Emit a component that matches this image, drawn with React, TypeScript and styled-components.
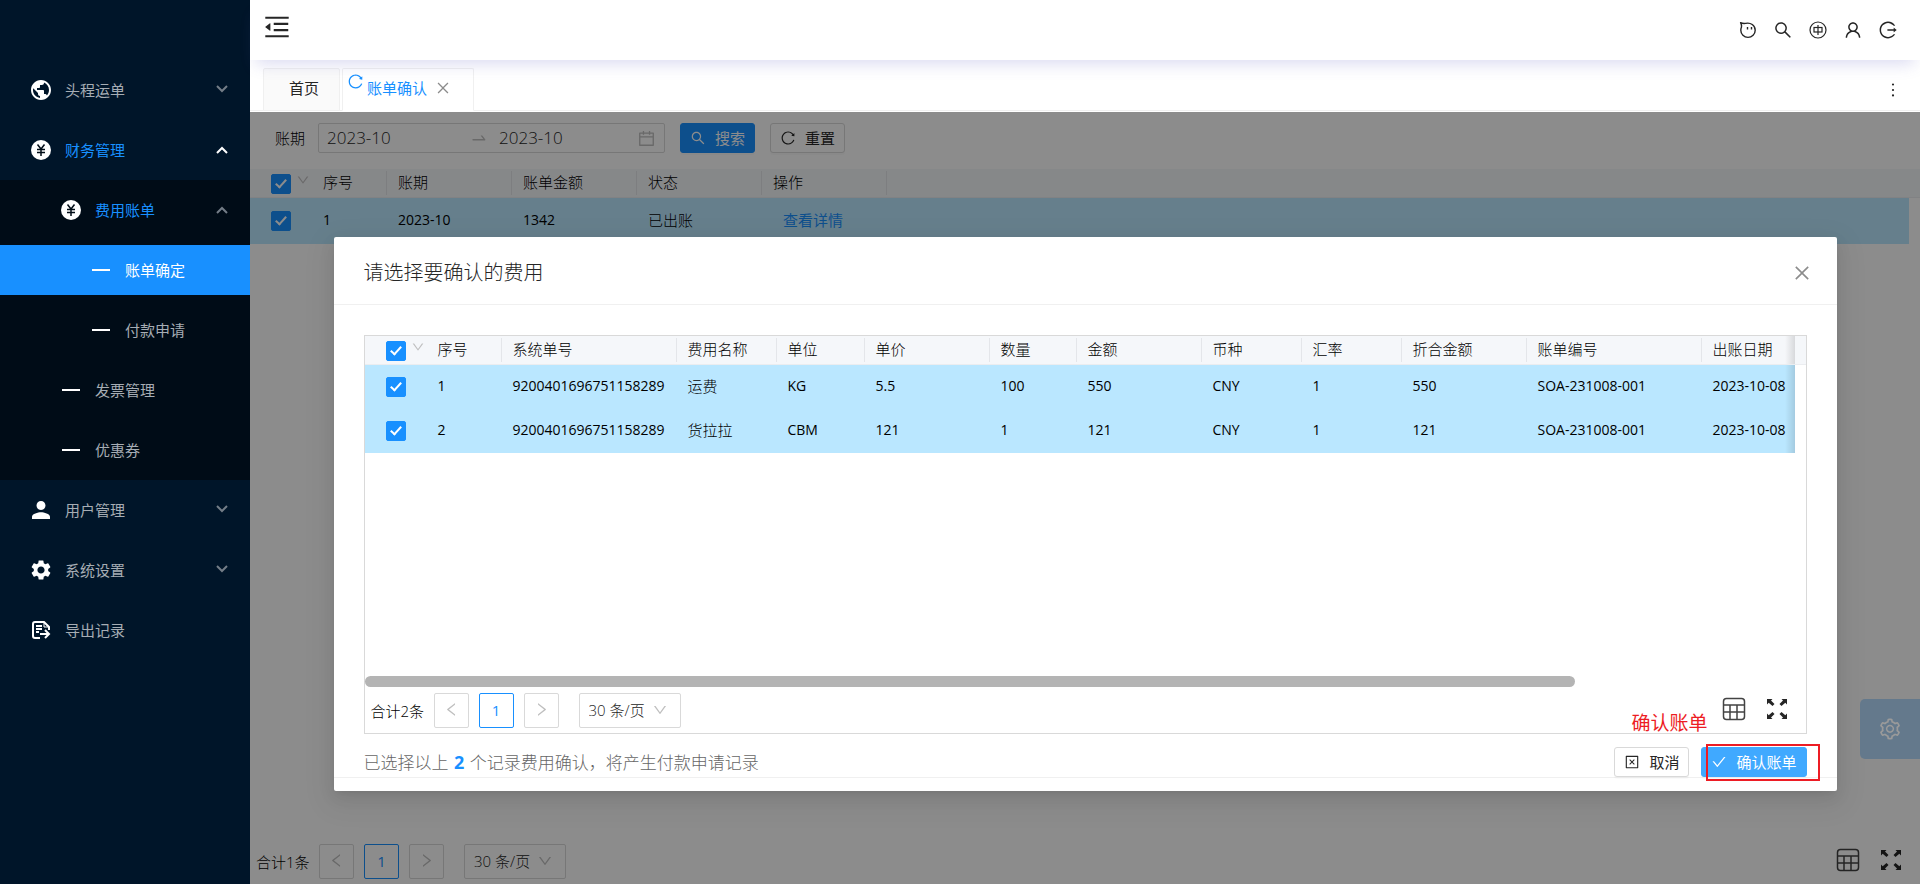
import React, { useState } from 'react';
import styled, { createGlobalStyle, css } from 'styled-components';
import {
  AiOutlineCalendar,
  AiOutlineCheck,
  AiOutlineClose,
  AiOutlineCloseSquare,
  AiOutlineDown,
  AiOutlineLeft,
  AiOutlineLogout,
  AiOutlineMenuFold,
  AiOutlineMore,
  AiOutlineReload,
  AiOutlineRight,
  AiOutlineSearch,
  AiOutlineSetting,
  AiOutlineSwapRight,
  AiOutlineUser,
} from 'react-icons/ai';
import { IoMdPerson } from 'react-icons/io';
import { MdPublic, MdSettings } from 'react-icons/md';

const GlobalStyle = createGlobalStyle`
  *, *::before, *::after { box-sizing: border-box; }
  body {
    margin: 0;
    background: #fff;
    color: #000;
    font-family: "Open Sans", "Noto Sans CJK SC", sans-serif;
    font-size: 15px;
    font-weight: 300;
    line-height: 20px;
  }
  button, input, select { font: inherit; color: inherit; margin: 0; }
  button { cursor: pointer; }
  svg { display: block; flex: none; }
`;

const blue = '#1890ff';

/* ---------- drawings ---------- */

const ChevronIcon = ({ up }: { up?: boolean }) => (
  <svg width="12" height="8" viewBox="0 0 12 8" fill="none" stroke="currentColor" strokeWidth="2">
    <path d={up ? 'M1 7l5-5 5 5' : 'M1 1l5 5 5-5'} />
  </svg>
);

const DashIcon = () => (
  <svg width="18" height="20" viewBox="0 0 18 20">
    <rect y="9" width="18" height="2" fill="#fff" />
  </svg>
);

const YuanIcon = () => (
  <svg width="20" height="20" viewBox="0 0 20 20">
    <circle cx="10" cy="10" r="10" fill="currentColor" />
    <path d="M6.500 4.500L10 9l3.500-4.500M10 9v7M6 9.500h8M6 12.500h8" fill="none" stroke="#000c17" strokeWidth="1.500" />
  </svg>
);

const ExportIcon = () => (
  <svg width="20" height="20" viewBox="0 0 20 20" fill="none" stroke="currentColor" strokeWidth="2">
    <path d="M9 18H4q-2 0-2-2V4q0-2 2-2h9l5 5v3" />
    <path d="M13 2v5h5" strokeWidth="1" />
    <path d="M5 6h6M5 9h6M5 12h3" />
    <path d="M9 14h8M14 10l4 4-4 4" />
  </svg>
);

const FaceIcon = () => (
  <svg width="18" height="18" viewBox="0 0 18 18" fill="none" stroke="currentColor" strokeWidth="1.4">
    <path d="M1.6 1.7c1.6.8 3.2 1 5 .7 5-1.2 9.600 2 9.600 6.800a7.200 7.200 0 0 1-14.400 0c0-1.200.3-2.200.7-3.200.2-1.500-.2-3-.9-4.300z" strokeLinejoin="round" />
    <path d="M8.500 6v2.400M12.500 6v2.400" />
  </svg>
);

const LanguageIcon = () => (
  <svg width="18" height="18" viewBox="0 0 18 18" fill="none" stroke="currentColor" strokeWidth="1.2">
    <circle cx="9" cy="9" r="8" />
    <rect x="5" y="6.500" width="8" height="4.500" />
    <path d="M9 4v10" />
  </svg>
);

const GridIcon = () => (
  <svg width="24" height="24" viewBox="0 0 24 24" fill="none" stroke="#434343" strokeWidth="1.500">
    <rect x="1.500" y="1.500" width="21" height="21" rx="3" />
    <path d="M1.500 8h21M1.500 15h21M8 8v14M15 8v14" />
  </svg>
);

const ExpandIcon = () => (
  <svg width="20" height="20" viewBox="0 0 20 20">
    <path
      fill="currentColor"
      d="M0 0h5.500L4 1.600l3.500 3.500-2 2L1.700 3.800 0 5.500zM20 0v5.500l-1.700-1.700-3.800 3.300-2-2L16 1.600 14.500 0zM0 20v-5.500l1.700 1.700 3.800-3.300 2 2L4 18.400 5.500 20zM20 20h-5.500l1.500-1.600-3.500-3.500 2-2 3.800 3.300 1.700-1.700z"
    />
  </svg>
);

/* ---------- shell ---------- */

const Shell = styled.div`
  display: flex;
  min-height: 100vh;
`;

const Sidebar = styled.nav`
  flex: none;
  width: 250px;
  padding-top: 60px;
  background: #001529;
  font-weight: 400;
`;

const Main = styled.div`
  flex: 1;
  min-width: 0;
  display: flex;
  flex-direction: column;
`;

const MenuGroup = styled.div`
  background: #000c17;
`;

const MenuItem = styled.a<{ $level?: number; $tone?: 'open' | 'active' }>`
  display: flex;
  align-items: center;
  height: 50px;
  margin: 5px 0;
  padding: 0 22px 0 ${(p) => 31 + 30 * ((p.$level ?? 1) - 1)}px;
  gap: 14px;
  color: ${(p) => (p.$tone === 'open' ? blue : p.$tone === 'active' ? '#fff' : '#a6adb4')};
  background: ${(p) => (p.$tone === 'active' ? blue : 'transparent')};
  text-decoration: none;
`;

const MenuRow = styled.div`
  display: flow-root;
`;

const MenuIcon = styled.span`
  display: flex;
  justify-content: center;
  width: 20px;
  color: #fff;
`;

const MenuArrow = styled.span<{ $bright?: boolean; $down?: boolean }>`
  margin: 0 0 ${(p) => (p.$down ? 3 : 0)}px auto;
  color: ${(p) => (p.$bright ? '#fff' : '#737d87')};
`;

const Header = styled.header`
  position: relative;
  z-index: 1;
  display: flex;
  align-items: center;
  justify-content: space-between;
  height: 60px;
  padding: 0 22px 0 12px;
  background: #fff;
  box-shadow: 0 10px 16px -6px rgba(90, 90, 190, 0.22);
`;

const IconButton = styled.button`
  display: flex;
  align-items: center;
  justify-content: center;
  padding: 0;
  border: 0;
  background: none;
  color: #262626;
`;

const FoldButton = styled(IconButton)`
  margin-bottom: 6px;
`;

const HeaderTools = styled.div`
  display: flex;
  gap: 15px;
  & > button { width: 20px; height: 20px; }
`;

const TabBar = styled.div`
  display: flex;
  align-items: flex-end;
  gap: 2px;
  height: 51px;
  margin-bottom: 1px;
  padding-left: 13px;
  border-bottom: 1px solid #f0f0f0;
`;

const Tab = styled.button<{ $active?: boolean }>`
  display: flex;
  align-items: center;
  height: 43px;
  margin-bottom: -1px;
  padding: ${(p) => (p.$active ? '0 22px 3px 4px' : '0 20px 3px 25px')};
  border: 1px solid #f0f0f0;
  border-bottom-color: ${(p) => (p.$active ? '#fff' : '#f0f0f0')};
  border-radius: 2px 2px 0 0;
  background: ${(p) => (p.$active ? '#fff' : '#fafafa')};
  color: ${(p) => (p.$active ? blue : '#262626')};
  font-weight: 400;
  & > .reload { margin: 0 3px 14px 0; }
  & > .close { margin-left: 8px; color: #8c8c8c; }
`;

const MoreButton = styled(IconButton)`
  margin: 0 17px 10px auto;
`;

/* ---------- page content ---------- */

const Workspace = styled.main`
  position: relative;
  flex: 1;
  display: flex;
  flex-direction: column;
`;

const SearchBar = styled.form`
  display: flex;
  align-items: center;
  gap: 15px;
  padding: 11px 25px 16px;
`;

const Field = styled.div`
  display: flex;
  align-items: center;
  gap: 13px;
`;

const RangeBox = styled.div`
  display: grid;
  grid-template-columns: 143px 29px 1fr auto;
  align-items: center;
  width: 347px;
  height: 30px;
  padding: 0 8px;
  border: 1px solid #d9d9d9;
  border-radius: 2px;
  color: #bfbfbf;
`;

const RangeInput = styled.input`
  width: 100%;
  min-width: 0;
  padding: 0;
  border: 0;
  outline: 0;
  background: none;
  color: #262626;
  font-size: 17px;
`;

const Button = styled.button<{ $kind?: 'primary' | 'bright' }>`
  display: flex;
  align-items: center;
  gap: 9px;
  height: 30px;
  padding: 0 9px;
  border: 1px solid #d9d9d9;
  border-radius: 3px;
  background: #fff;
  color: #262626;
  font-weight: 400;
  box-shadow: 0 2px 0 rgba(0, 0, 0, 0.02);
  white-space: nowrap;
  ${(p) =>
    p.$kind &&
    css`
      color: #fff;
      background: ${p.$kind === 'primary' ? blue : '#40a9ff'};
      border-color: ${p.$kind === 'primary' ? blue : '#40a9ff'};
    `}
`;

const TableArea = styled.div`
  flex: 1;
`;

const Table = styled.table`
  width: 100%;
  table-layout: fixed;
  border-collapse: separate;
  border-spacing: 0;
`;

const Th = styled.th`
  position: relative;
  height: 29px;
  padding: 0 0 2px 11px;
  border-bottom: 1px solid #ebedf0;
  background: #f5f7fa;
  font-weight: inherit;
  text-align: left;
  white-space: nowrap;
  &:not(.plain)::after {
    content: '';
    position: absolute;
    top: 2px;
    right: 0;
    width: 1px;
    height: 24px;
    background: #e4e6ea;
  }
`;

const Td = styled.td<{ $tall?: boolean }>`
  position: relative;
  height: ${(p) => (p.$tall ? 46 : 44)}px;
  padding: 0 0 2px 11px;
  background: #bae7ff;
  font-size: 14px;
  font-weight: 400;
  white-space: nowrap;
`;

const CjkText = styled.span`
  font-size: 15px;
  font-weight: 300;
`;

const GutterTd = styled.td`
  background: none;
`;

const fade = css`
  content: '';
  position: absolute;
  top: 0;
  right: 0;
  width: 10px;
  height: 100%;
  background: linear-gradient(to right, rgba(0, 0, 0, 0), rgba(0, 0, 0, 0.12));
`;

const EdgeTh = styled(Th)`
  &:not(.plain)::after { ${fade} }
`;

const EdgeTd = styled(Td)`
  &::after { ${fade} }
`;

const CheckCell = styled.div<{ $head?: boolean }>`
  display: flex;
  align-items: center;
  gap: 5px;
  padding: ${(p) => (p.$head ? 3 : 2)}px 0 0 10px;
  color: #bfbfbf;
  & > svg { margin-bottom: 8px; }
`;

const Checkbox = styled.input.attrs({ type: 'checkbox' })`
  position: relative;
  appearance: none;
  flex: none;
  width: 20px;
  height: 20px;
  border: 1px solid #d9d9d9;
  border-radius: 2px;
  background: #fff;
  &:checked { border-color: ${blue}; background: ${blue}; }
  &:checked::after {
    content: '';
    position: absolute;
    left: 6px;
    top: 2px;
    width: 6px;
    height: 11px;
    border: solid #fff;
    border-width: 0 2px 2px 0;
    transform: rotate(42deg);
  }
`;

const DetailLink = styled.a`
  padding-left: 10px;
  color: ${blue};
  font-size: 15px;
  text-decoration: none;
`;

/* ---------- pagination ---------- */

const PagerBar = styled.div`
  display: flex;
  align-items: center;
  padding: 5px 19px 5px 6px;
`;

const Total = styled.span`
  width: 53px;
  margin-right: 10px;
  white-space: nowrap;
`;

const PageButton = styled.button<{ $current?: boolean }>`
  display: flex;
  align-items: center;
  justify-content: center;
  width: 35px;
  height: 35px;
  margin-right: 10px;
  padding: 0 0 2px;
  border: 1px solid ${(p) => (p.$current ? blue : '#d9d9d9')};
  border-radius: 2px;
  background: #fff;
  color: ${(p) => (p.$current ? blue : '#bfbfbf')};
  font-weight: 400;
`;

const SizePicker = styled.label`
  display: grid;
  align-items: center;
  width: 102px;
  margin-left: 10px;
  color: #bfbfbf;
  & > select, & > svg { grid-area: 1 / 1; }
  & > svg { justify-self: end; margin: 0 13px 2px 0; pointer-events: none; }
`;

const SizeSelect = styled.select`
  appearance: none;
  width: 100%;
  height: 35px;
  padding: 0 9px 2px;
  border: 1px solid #d9d9d9;
  border-radius: 2px;
  background: #fff;
  color: #262626;
`;

const PagerTools = styled.div`
  display: flex;
  align-items: center;
  gap: 21px;
  margin: 0 0 3px auto;
`;

/* ---------- dialog ---------- */

const Mask = styled.div`
  position: absolute;
  inset: 0;
  display: flex;
  justify-content: center;
  align-items: flex-start;
  padding-top: 125px;
  background: rgba(0, 0, 0, 0.45);
`;

const Dialog = styled.section`
  width: 90%;
  padding-bottom: 13px;
  border-radius: 2px;
  background: #fff;
  box-shadow: 0 3px 6px -4px rgba(0, 0, 0, 0.12), 0 6px 16px 0 rgba(0, 0, 0, 0.08),
    0 9px 28px 8px rgba(0, 0, 0, 0.05);
`;

const DialogHeader = styled.div`
  display: flex;
  align-items: center;
  justify-content: space-between;
  height: 68px;
  padding: 4px 25px 0 30px;
  border-bottom: 1px solid #f0f0f0;
  & > button { color: #8c8c8c; }
`;

const DialogTitle = styled.h2`
  margin: 0;
  color: #262626;
  font-size: 20px;
  font-weight: inherit;
  line-height: 28px;
`;

const TableBox = styled.div`
  margin: 30px 30px 13px;
  border: 1px solid #d9d9d9;
`;

const Scroller = styled.div`
  display: flex;
  flex-direction: column;
  justify-content: space-between;
  height: 352px;
  padding-bottom: 1px;
`;

const ScrollThumb = styled.div`
  width: 84%;
  height: 11px;
  border-radius: 6px;
  background: #b4b4b4;
`;

const DialogFooter = styled.div`
  display: flex;
  align-items: center;
  gap: 12px;
  padding: 0 30px;
  border-bottom: 1px solid #f0f0f0;
`;

const Summary = styled.p`
  margin: 0 auto 0 0;
  color: #666;
  font-size: 17px;
  line-height: 24px;
  & > strong { margin: 0 1px; color: ${blue}; font-size: 18px; font-weight: 700; }
`;

const Marked = styled.div`
  position: relative;
`;

const MarkFrame = styled.div`
  position: absolute;
  inset: -3px -13px -4px 5px;
  border: 2px solid #ed1c24;
  pointer-events: none;
`;

const MarkNote = styled.span`
  position: absolute;
  right: 99px;
  bottom: 40px;
  color: #ed1c24;
  font-size: 19px;
  font-weight: 400;
  line-height: 28px;
  white-space: nowrap;
`;

const SettingsHandle = styled.button`
  position: absolute;
  top: 587px;
  right: 0;
  display: flex;
  align-items: center;
  justify-content: center;
  width: 60px;
  height: 60px;
  border: 0;
  border-radius: 5px 0 0 5px;
  background: #64798c;
  color: #9a9a9a;
`;

/* ---------- pieces ---------- */

const menuIcons = {
  earth: <MdPublic size={24} />,
  yuan: <YuanIcon />,
  user: <IoMdPerson size={24} />,
  gear: <MdSettings size={24} />,
  export: <ExportIcon />,
  dash: <DashIcon />,
};

type EntryProps = {
  icon: keyof typeof menuIcons;
  text: string;
  level?: number;
  tone?: 'open' | 'active';
  arrow?: 'up' | 'down' | 'upBright';
};

const MenuEntry = ({ icon, text, level, tone, arrow }: EntryProps) => (
  <MenuRow>
    <MenuItem href="#" $level={level} $tone={tone}>
      <MenuIcon>{menuIcons[icon]}</MenuIcon>
      {text}
      {arrow && (
        <MenuArrow $bright={arrow === 'upBright'} $down={arrow === 'down'}>
          <ChevronIcon up={arrow !== 'down'} />
        </MenuArrow>
      )}
    </MenuItem>
  </MenuRow>
);

const Pager = ({ total }: { total: string }) => (
  <PagerBar>
    <Total>{total}</Total>
    <PageButton aria-label="上一页"><AiOutlineLeft size={17} /></PageButton>
    <PageButton $current>1</PageButton>
    <PageButton aria-label="下一页"><AiOutlineRight size={17} /></PageButton>
    <SizePicker>
      <SizeSelect aria-label="每页条数" defaultValue="30">
        <option value="30">30 条/页</option>
        <option value="50">50 条/页</option>
      </SizeSelect>
      <AiOutlineDown size={16} />
    </SizePicker>
    <PagerTools>
      <IconButton aria-label="列设置"><GridIcon /></IconButton>
      <IconButton aria-label="全屏"><ExpandIcon /></IconButton>
    </PagerTools>
  </PagerBar>
);

const CheckAll = () => (
  <CheckCell $head>
    <Checkbox aria-label="全选" defaultChecked />
    <AiOutlineDown size={14} />
  </CheckCell>
);

const CheckRow = () => (
  <CheckCell>
    <Checkbox aria-label="选择" defaultChecked />
  </CheckCell>
);

const feeColumns: [string, number | undefined][] = [
  ['序号', 75],
  ['系统单号', 175],
  ['费用名称', 100],
  ['单位', 88],
  ['单价', 125],
  ['数量', 87],
  ['金额', 125],
  ['币种', 100],
  ['汇率', 100],
  ['折合金额', 125],
  ['账单编号', 175],
  ['出账日期', undefined],
];

const feeRows = [
  ['1', '9200401696751158289', '运费', 'KG', '5.5', '100', '550', 'CNY', '1', '550', 'SOA-231008-001', '2023-10-08'],
  ['2', '9200401696751158289', '货拉拉', 'CBM', '121', '1', '121', 'CNY', '1', '121', 'SOA-231008-001', '2023-10-08'],
];

const FeeTable = () => (
  <Table>
    <colgroup>
      <col width={62} />
      {feeColumns.map(([name, width]) => <col key={name} width={width} />)}
      <col width={11} />
    </colgroup>
    <thead>
      <tr>
        <Th className="plain"><CheckAll /></Th>
        {feeColumns.map(([name, width]) =>
          width ? <Th key={name}>{name}</Th> : <EdgeTh key={name}>{name}</EdgeTh>,
        )}
        <Th className="plain" />
      </tr>
    </thead>
    <tbody>
      {feeRows.map((row) => (
        <tr key={row[0]}>
          <Td><CheckRow /></Td>
          {row.map((cell, i) => {
            const Cell = i === row.length - 1 ? EdgeTd : Td;
            return <Cell key={i}>{i === 2 ? <CjkText>{cell}</CjkText> : cell}</Cell>;
          })}
          <GutterTd />
        </tr>
      ))}
    </tbody>
  </Table>
);

const BillTable = () => (
  <Table>
    <colgroup>
      <col width={62} />
      <col width={75} />
      <col width={125} />
      <col width={125} />
      <col width={125} />
      <col width={125} />
      <col />
      <col width={11} />
    </colgroup>
    <thead>
      <tr>
        <Th className="plain"><CheckAll /></Th>
        <Th>序号</Th>
        <Th>账期</Th>
        <Th>账单金额</Th>
        <Th>状态</Th>
        <Th>操作</Th>
        <Th className="plain" />
        <Th className="plain" />
      </tr>
    </thead>
    <tbody>
      <tr>
        <Td $tall><CheckRow /></Td>
        <Td $tall>1</Td>
        <Td $tall>2023-10</Td>
        <Td $tall>1342</Td>
        <Td $tall><CjkText>已出账</CjkText></Td>
        <Td $tall><DetailLink href="#">查看详情</DetailLink></Td>
        <Td $tall />
        <GutterTd />
      </tr>
    </tbody>
  </Table>
);

export default function App() {
  const [from, setFrom] = useState('2023-10');
  const [to, setTo] = useState('2023-10');

  return (
    <>
      <GlobalStyle />
      <Shell>
        <Sidebar>
          <MenuEntry icon="earth" text="头程运单" arrow="down" />
          <MenuEntry icon="yuan" text="财务管理" tone="open" arrow="upBright" />
          <MenuGroup>
            <MenuEntry icon="yuan" text="费用账单" level={2} tone="open" arrow="up" />
            <MenuEntry icon="dash" text="账单确定" level={3} tone="active" />
            <MenuEntry icon="dash" text="付款申请" level={3} />
            <MenuEntry icon="dash" text="发票管理" level={2} />
            <MenuEntry icon="dash" text="优惠券" level={2} />
          </MenuGroup>
          <MenuEntry icon="user" text="用户管理" arrow="down" />
          <MenuEntry icon="gear" text="系统设置" arrow="down" />
          <MenuEntry icon="export" text="导出记录" />
        </Sidebar>
        <Main>
          <Header>
            <FoldButton aria-label="收起菜单"><AiOutlineMenuFold size={30} /></FoldButton>
            <HeaderTools>
              <IconButton aria-label="客服"><FaceIcon /></IconButton>
              <IconButton aria-label="搜索"><AiOutlineSearch size={20} /></IconButton>
              <IconButton aria-label="语言"><LanguageIcon /></IconButton>
              <IconButton aria-label="用户"><AiOutlineUser size={20} /></IconButton>
              <IconButton aria-label="退出"><AiOutlineLogout size={20} /></IconButton>
            </HeaderTools>
          </Header>
          <TabBar>
            <Tab>首页</Tab>
            <Tab $active>
              <AiOutlineReload className="reload" size={17} />
              账单确认
              <AiOutlineClose className="close" size={16} />
            </Tab>
            <MoreButton aria-label="更多"><AiOutlineMore size={20} /></MoreButton>
          </TabBar>
          <Workspace>
            <SearchBar onSubmit={(e) => e.preventDefault()}>
              <Field>
                <label htmlFor="period">账期</label>
                <RangeBox>
                  <RangeInput id="period" value={from} onChange={(e) => setFrom(e.target.value)} />
                  <AiOutlineSwapRight size={18} />
                  <RangeInput aria-label="结束账期" value={to} onChange={(e) => setTo(e.target.value)} />
                  <AiOutlineCalendar size={19} />
                </RangeBox>
              </Field>
              <Button $kind="primary" type="submit"><AiOutlineSearch size={16} />搜索</Button>
              <Button type="reset"><AiOutlineReload size={16} />重置</Button>
            </SearchBar>
            <TableArea><BillTable /></TableArea>
            <Pager total="合计1条" />
            <Mask>
              <Dialog role="dialog" aria-labelledby="dialog-title">
                <DialogHeader>
                  <DialogTitle id="dialog-title">请选择要确认的费用</DialogTitle>
                  <IconButton aria-label="关闭"><AiOutlineClose size={20} /></IconButton>
                </DialogHeader>
                <TableBox>
                  <Scroller>
                    <FeeTable />
                    <ScrollThumb />
                  </Scroller>
                  <Pager total="合计2条" />
                </TableBox>
                <DialogFooter>
                  <Summary>已选择以上 <strong>2</strong> 个记录费用确认，将产生付款申请记录</Summary>
                  <Button><AiOutlineCloseSquare size={16} />取消</Button>
                  <Marked>
                    <Button $kind="bright"><AiOutlineCheck size={16} />确认账单</Button>
                    <MarkFrame />
                    <MarkNote>确认账单</MarkNote>
                  </Marked>
                </DialogFooter>
              </Dialog>
              <SettingsHandle aria-label="设置"><AiOutlineSetting size={24} /></SettingsHandle>
            </Mask>
          </Workspace>
        </Main>
      </Shell>
    </>
  );
}
